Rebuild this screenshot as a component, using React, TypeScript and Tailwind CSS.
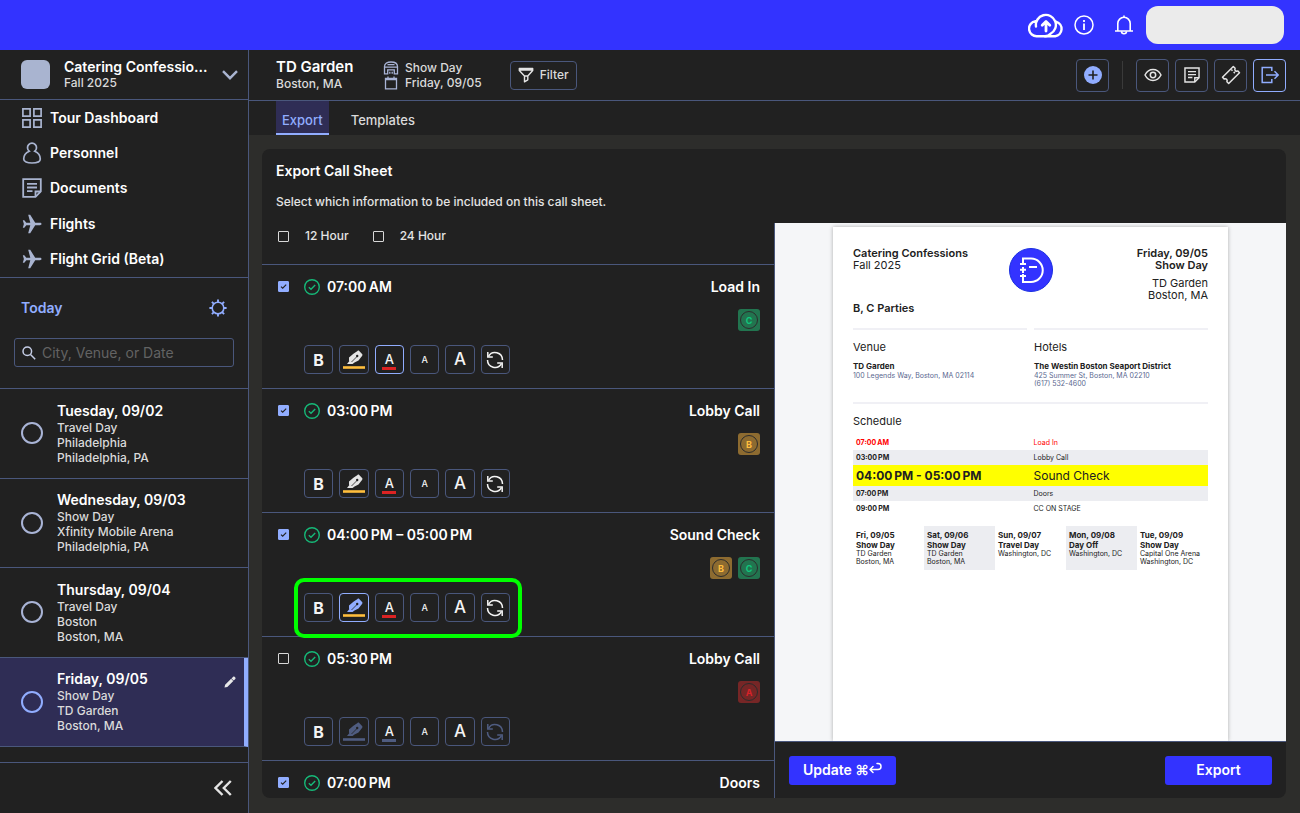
import { useState, type ReactNode } from 'react';
import clsx from 'clsx';

type Party = 'A' | 'B' | 'C';

type Tone = 'default' | 'active' | 'disabled';

interface CallItem {
    id: string;
    time: string;
    title: string;
    parties: Party[];
    included: boolean;
    highlight: Tone;
    color: Tone;
    spotlight?: boolean;
    collapsed?: boolean;
}

const navLinks = [
    { label: 'Tour Dashboard', icon: <GridIcon /> },
    { label: 'Personnel', icon: <PersonIcon /> },
    { label: 'Documents', icon: <NoteIcon className="h-5 w-5" /> },
    { label: 'Flights', icon: <PlaneIcon /> },
    { label: 'Flight Grid (Beta)', icon: <PlaneIcon /> },
];

const days = [
    { date: 'Tuesday, 09/02', lines: ['Travel Day', 'Philadelphia', 'Philadelphia, PA'] },
    { date: 'Wednesday, 09/03', lines: ['Show Day', 'Xfinity Mobile Arena', 'Philadelphia, PA'] },
    { date: 'Thursday, 09/04', lines: ['Travel Day', 'Boston', 'Boston, MA'] },
    { date: 'Friday, 09/05', lines: ['Show Day', 'TD Garden', 'Boston, MA'], current: true },
];

const initialItems: CallItem[] = [
    { id: 'load-in', time: '07:00\u202fAM', title: 'Load In', parties: ['C'], included: true, highlight: 'default', color: 'active' },
    { id: 'lobby-1', time: '03:00\u202fPM', title: 'Lobby Call', parties: ['B'], included: true, highlight: 'default', color: 'default' },
    { id: 'sound-check', time: '04:00\u202fPM – 05:00\u202fPM', title: 'Sound Check', parties: ['B', 'C'], included: true, highlight: 'active', color: 'default', spotlight: true },
    { id: 'lobby-2', time: '05:30\u202fPM', title: 'Lobby Call', parties: ['A'], included: false, highlight: 'disabled', color: 'disabled' },
    { id: 'doors', time: '07:00\u202fPM', title: 'Doors', parties: [], included: true, highlight: 'default', color: 'default', collapsed: true },
];

const scheduleRows = [
    { time: '07:00\u202fAM', label: 'Load In', row: 'h-[15px] text-[7px] text-[#ff0000]' },
    { time: '03:00\u202fPM', label: 'Lobby Call', row: 'h-[15px] text-[7px] bg-[#ecedf1]' },
    { time: '04:00\u202fPM - 05:00\u202fPM', label: 'Sound Check', row: 'h-[21px] text-[12px] bg-[#ffff00]' },
    { time: '07:00\u202fPM', label: 'Doors', row: 'h-[15px] text-[7px] bg-[#ecedf1]' },
    { time: '09:00\u202fPM', label: 'CC ON STAGE', row: 'h-[15px] text-[7px]' },
];

const upcoming = [
    { date: 'Fri, 09/05', type: 'Show Day', lines: ['TD Garden', 'Boston, MA'] },
    { date: 'Sat, 09/06', type: 'Show Day', lines: ['TD Garden', 'Boston, MA'] },
    { date: 'Sun, 09/07', type: 'Travel Day', lines: ['Washington, DC'] },
    { date: 'Mon, 09/08', type: 'Day Off', lines: ['Washington, DC'] },
    { date: 'Tue, 09/09', type: 'Show Day', lines: ['Capital One Arena', 'Washington, DC'] },
];

/* ---------- Icons ---------- */

function GridIcon() {
    return (
        <svg viewBox="0 0 20 20" className="h-5 w-5" fill="none" stroke="currentColor" strokeWidth="1.7">
            <path d="M.9.9h7.200v7.200H.9zM11.900.9h7.200v7.200h-7.200zM.9 11.900h7.200v7.200H.9zM11.900 11.900h7.200v7.200h-7.200z" />
        </svg>
    );
}

function PersonIcon() {
    return (
        <svg viewBox="0 0 20 22" className="h-[22px] w-5" fill="none" stroke="currentColor" strokeWidth="1.7">
            <path d="M7.2 9.2A4.500 4.500 0 1 1 12.800 9.200C16 10.600 18.300 14 18.300 17c0 2.600-3.500 4-8.300 4s-8.300-1.400-8.300-4c0-3 2.300-6.400 5.500-7.800z" />
        </svg>
    );
}

function NoteIcon({ className }: { className: string }) {
    return (
        <svg viewBox="0 0 20 20" className={className} fill="none" stroke="currentColor" strokeWidth="1.8">
            <path d="M1.200 1.200h17.600v12.300l-5.300 5.300H1.200z" />
            <path d="M13.500 18.800v-5.300h5.300M5 5.800h10M5 9.500h10M5 13.200h5.500" />
        </svg>
    );
}

function PlaneIcon() {
    return (
        <svg viewBox="0 0 20 20" className="h-5 w-5" fill="currentColor">
            <path d="M.8 6.200h1.500l2 2.600h4L6.200.7h2l5 8.100h4.700c1 0 1.600.5 1.600 1.200s-.6 1.200-1.600 1.200h-4.700l-5 8.100h-2l2.100-8.100h-4l-2 2.600H.8L1.900 10z" />
        </svg>
    );
}

function CloudUploadIcon() {
    return (
        <svg viewBox="0 0 36 26" className="h-[26px] w-9" fill="none" stroke="#fff" strokeWidth="2.400" strokeLinecap="round" strokeLinejoin="round">
            <path d="M8 14.500a10 10 0 1 1 14.500 7.300c-1.300 1.600-3 2.400-5.500 2.400H9.300A7.600 7.600 0 0 1 7.600 9.100" />
            <path d="M28.300 9.800a7.400 7.400 0 0 1-1 14.400H17" />
            <path d="M18 19v-8.500M14.200 13.200 18 9.400l3.800 3.800" strokeWidth="2.800" />
        </svg>
    );
}

function InfoIcon() {
    return (
        <svg viewBox="0 0 20 20" className="h-5 w-5" fill="none" stroke="#fff" strokeWidth="1.500">
            <circle cx="10" cy="10" r="9" />
            <path d="M10 8.500v6.500M10 5v2" strokeWidth="1.800" />
        </svg>
    );
}

function BellIcon() {
    return (
        <svg viewBox="0 0 20 20" className="h-5 w-5" fill="none" stroke="#fff" strokeWidth="1.600">
            <path d="M1 16h18M3.800 16V8.500a6.200 6.200 0 0 1 12.400 0V16M10 2.300V.5" />
            <path d="M7.500 16.200a2.500 2.500 0 0 0 5 0" />
        </svg>
    );
}

function VenueIcon() {
    return (
        <svg viewBox="0 0 16 14" className="h-3.5 w-4" fill="none" stroke="#a9b4d6" strokeWidth="1.300">
            <path d="M1.500 12.800V5.500C1.500 2.500 4.300 1 8 1s6.500 1.500 6.500 4.500v7.300h-3.200v-4H4.700v4zM1.500 6.200h13M6.800 12.800v-2M9.200 12.800v-2M4.500 3.700h7" />
        </svg>
    );
}

function CalendarIcon() {
    return (
        <svg viewBox="0 0 16 14" className="h-3.5 w-4" fill="none" stroke="#a9b4d6" strokeWidth="1.300">
            <path d="M2.500 2.500h11v10.300h-11zM2.500 3.700h11M5 .6v2M11 .6v2" />
        </svg>
    );
}

function FilterIcon() {
    return (
        <svg viewBox="0 0 16 16" className="h-4 w-4" fill="none" stroke="#e4e4e4" strokeWidth="1.400" strokeLinejoin="round">
            <path d="M1.300 1.500h13.400v2L9.800 9v3.800L6.500 14.800V9L1.300 3.500zM1.300 3h13.400M6.500 9h3.300" />
        </svg>
    );
}

function PlusCircleIcon() {
    return (
        <svg viewBox="0 0 18 18" className="h-[18px] w-[18px]">
            <circle cx="9" cy="9" r="9" fill="#91adff" />
            <path d="M9 4.500v9M4.500 9h9" stroke="#212121" strokeWidth="1.600" />
        </svg>
    );
}

function EyeIcon() {
    return (
        <svg viewBox="0 0 18 14" className="h-3.5 w-[18px]" fill="none" stroke="currentColor" strokeWidth="1.500">
            <path d="M1 7c1.800-3.500 4.600-5.500 8-5.500S15.200 3.500 17 7c-1.800 3.500-4.600 5.500-8 5.500S2.800 10.500 1 7z" />
            <circle cx="9" cy="7" r="2.700" />
        </svg>
    );
}

function TicketIcon() {
    return (
        <svg viewBox="0 0 20 20" className="h-5 w-5" fill="none" stroke="currentColor" strokeWidth="1.500" strokeLinejoin="round">
            <path d="M1.500 12.300 12.300 1.500l1.800 1.800a1.900 1.900 0 0 0 2.600 2.600l1.800 1.800L7.700 18.500l-1.800-1.800a1.900 1.900 0 0 0-2.600-2.600z" />
            <path d="m10.300 4.500 1.200 1.200M12.700 6.900l1.200 1.200" />
        </svg>
    );
}

function ExportIcon() {
    return (
        <svg viewBox="0 0 18 18" className="h-[18px] w-[18px]" fill="none" stroke="#91adff" strokeWidth="1.500">
            <path d="M10.800 5V1.500H1.200v15h9.600V13M5 9h12M13.500 5.300 17.200 9l-3.700 3.700" />
        </svg>
    );
}

function GearIcon() {
    return (
        <svg viewBox="0 0 18 18" className="h-[18px] w-[18px]" fill="none" stroke="#91adff" strokeWidth="1.600">
            <circle cx="9" cy="9" r="5.800" />
            <path d="M9 3.200V.4M9 14.800v2.800M3.200 9H.4M14.800 9h2.800M4.900 4.900 2.900 2.900M13.100 13.100l2 2M4.900 13.100l-2 2M13.100 4.900l2-2" strokeWidth="1.900" />
        </svg>
    );
}

function SearchIcon() {
    return (
        <svg viewBox="0 0 14 14" className="h-3.5 w-3.5 shrink-0" fill="none" stroke="#c5cde6" strokeWidth="1.500">
            <circle cx="5.300" cy="5.300" r="4.300" />
            <path d="m8.500 8.500 4.700 4.700" />
        </svg>
    );
}

function PencilIcon() {
    return (
        <svg viewBox="0 0 12 12" className="h-3 w-3" fill="#e8e8e8">
            <path d="m.5 11.500.6-2.700 6-6 2.200 2.200-6 6zM7.500 2.400l1.700-1.600c.4-.4.9-.4 1.300 0l.8.8c.4.4.4.900 0 1.300L9.700 4.600z" />
        </svg>
    );
}

function ConfirmedIcon() {
    return (
        <svg viewBox="0 0 16 16" className="h-4 w-4 shrink-0" fill="none" stroke="#16b978" strokeWidth="1.400">
            <circle cx="8" cy="8" r="7.300" />
            <path d="m4.800 8.300 2.200 2 4.200-4.300" />
        </svg>
    );
}

function HighlighterIcon({ tone }: { tone: Tone }) {
    const pen = { default: '#e4e4e4', active: '#91adff', disabled: '#4f5c80' }[tone];
    return (
        <svg viewBox="0 0 22 20" className="h-5 w-[22px]">
            <path fill={pen} d="M14.500.9c.6-.4 1.200-.4 1.700.1l2.900 3c.5.500.5 1.100.1 1.700l-3.700 4.700-4 2.100-1.900 1.500H4l2.400-2.900-.4-.4V7.500l4.400-3.800z" />
            <path stroke="#212121" strokeWidth=".8" d="M14 6.500 8.500 12" />
            <circle cx="14.200" cy="6" r="1.200" fill="#212121" />
            <path stroke={tone === 'disabled' ? '#4f5c80' : '#ffbe3d'} strokeWidth="2.600" d="M0 17.500h22" />
        </svg>
    );
}

function ResetIcon() {
    return (
        <svg viewBox="0 0 18 18" className="h-[18px] w-[18px]" fill="none" stroke="currentColor" strokeWidth="1.500">
            <path d="M2.500 5.300A7.500 7.500 0 0 1 16.500 9M15.500 12.700A7.500 7.500 0 0 1 1.500 9" />
            <path d="M1.800 1v5h5M16.200 17v-5h-5" />
        </svg>
    );
}

function ReturnIcon() {
    return (
        <svg viewBox="0 0 13 12" className="mb-1 h-3 w-[13px]" fill="none" stroke="currentColor" strokeWidth="1.500" strokeLinecap="round" strokeLinejoin="round">
            <path d="M4 4.500 1 7.500l3 3M1 7.500h8a3 3 0 0 0 0-6H8" />
        </svg>
    );
}

function BrandMark() {
    return (
        <svg viewBox="0 0 44 44" className="h-11 w-11" fill="none">
            <circle cx="22" cy="22" r="21.500" fill="#3333ff" stroke="#1a2fe0" />
            <path stroke="#fff" strokeWidth="2" d="M14 14v-3.500h8a11.500 11.500 0 0 1 0 23.500h-8v-3M20 19h8M11 16h6M14 13v3M11 21.800h6M14 19v6M11 28h6M14 26v5" />
        </svg>
    );
}

/* ---------- Controls ---------- */

function Checkbox({ id, checked, onChange }: { id: string; checked: boolean; onChange: () => void }) {
    return (
        <span className="relative block h-[11px] w-[11px]">
            <input
                id={id}
                type="checkbox"
                checked={checked}
                onChange={onChange}
                className="block h-[11px] w-[11px] appearance-none rounded-[1px] border border-[#d8d8d8] checked:border-[#91adff] checked:bg-[#91adff]"
            />
            {checked && (
                <svg viewBox="0 0 11 11" className="pointer-events-none absolute inset-0" fill="none" stroke="#212121" strokeWidth="1.200">
                    <path d="m3 5.600 1.700 1.600L8.200 3.700" />
                </svg>
            )}
        </span>
    );
}

function ToolButton({ label, active, children }: { label: string; active?: boolean; children: ReactNode }) {
    return (
        <button
            aria-label={label}
            className={clsx(
                'flex aspect-square items-center justify-center rounded-[4px] border leading-none text-[#f4f4f4]',
                active ? 'border-[#91adff]' : 'border-[#4a577c]',
            )}
        >
            {children}
        </button>
    );
}

function BarButton({ label, active, children }: { label: string; active?: boolean; children: ReactNode }) {
    return (
        <button
            aria-label={label}
            className={clsx(
                'flex h-[33px] w-[33px] items-center justify-center rounded-[4px] border text-[#e4e4e4]',
                active ? 'border-[#91adff]' : 'border-[#4a577c]',
            )}
        >
            {children}
        </button>
    );
}

function PartyBadge({ party }: { party: Party }) {
    const tone = {
        A: 'bg-[#762626] text-[#d8232a]',
        B: 'bg-[#8d6b30] text-[#ffbe3d]',
        C: 'bg-[#22744f] text-[#10c77e]',
    }[party];
    return (
        <span className={clsx('flex h-[22px] w-[22px] items-center justify-center rounded-[3px]', tone)}>
            <span className="flex h-[18px] w-[18px] items-center justify-center rounded-full border border-[#2c2c2c] text-[9px] font-bold leading-none">{party}</span>
        </span>
    );
}

function FormatTools({ item }: { item: CallItem }) {
    return (
        <div className="mt-3.5 grid w-[206px] grid-cols-6 gap-1.5">
            <ToolButton label="Bold">
                <span className="text-base font-bold">B</span>
            </ToolButton>
            <ToolButton label="Highlight" active={item.highlight === 'active'}>
                <HighlighterIcon tone={item.highlight} />
            </ToolButton>
            <ToolButton label="Text color" active={item.color === 'active'}>
                <span className={clsx('mt-1 w-3.5 border-b-[3px] pb-0.5 text-[13px] leading-3 font-medium', item.color === 'disabled' ? 'border-[#4f5c80]' : 'border-[#db2323]')}>A</span>
            </ToolButton>
            <ToolButton label="Smaller text">
                <span className="text-[9px] font-medium">A</span>
            </ToolButton>
            <ToolButton label="Larger text">
                <span className="text-[17px] font-medium">A</span>
            </ToolButton>
            <ToolButton label="Reset">
                <span className={item.included ? 'text-[#f4f4f4]' : 'text-[#4f5c80]'}>
                    <ResetIcon />
                </span>
            </ToolButton>
        </div>
    );
}

function CallRow({ item, onToggle }: { item: CallItem; onToggle: () => void }) {
    return (
        <li className={clsx('relative flex shrink-0 border-t border-[#4a577c] pr-3.5 pl-4', !item.collapsed && 'h-[124px]')}>
            <div className="pt-4">
                <Checkbox id={item.id} checked={item.included} onChange={onToggle} />
            </div>
            <div className="flex flex-1 flex-col pl-[15px]">
                <div className="flex h-11 items-center justify-between">
                    <label htmlFor={item.id} className="flex items-center gap-[7px] text-sm font-semibold text-white">
                        <ConfirmedIcon />
                        {item.time}
                    </label>
                    <h3 className="text-sm font-semibold text-white">{item.title}</h3>
                </div>
                <div className="flex justify-end gap-1.5">
                    {item.parties.map((party) => (
                        <PartyBadge key={party} party={party} />
                    ))}
                </div>
                {!item.collapsed && <FormatTools item={item} />}
            </div>
            {item.spotlight && <div className="pointer-events-none absolute top-[65px] left-8 z-10 h-[60px] w-[228px] rounded-[10px] border-4 border-[#00ff00]" />}
        </li>
    );
}

/* ---------- Page sections ---------- */

function Sidebar() {
    return (
        <aside className="flex w-[249px] shrink-0 flex-col border-r border-[#4a577c] bg-[#212121]">
            <button className="flex h-[50px] shrink-0 items-center border-b border-[#4a577c] pr-2.5 pl-[21px] text-left">
                <span className="h-[29px] w-[29px] rounded-md bg-[#a9b4d0]" />
                <span className="ml-3.5">
                    <span className="block text-sm leading-4 font-semibold whitespace-nowrap text-white">Catering Confessio...</span>
                    <span className="block text-xs leading-4 font-medium text-[#dadada]">Fall 2025</span>
                </span>
                <svg viewBox="0 0 16 10" className="ml-auto h-2.5 w-4" fill="none" stroke="#a9b4d0" strokeWidth="2.400">
                    <path d="m1 1.200 7 7 7-7" />
                </svg>
            </button>

            <nav className="grid h-[178px] shrink-0 grid-rows-5 border-b border-[#4a577c] pl-[21px]">
                {navLinks.map((link) => (
                    <a key={link.label} href="#" className="flex items-center gap-2 text-sm font-semibold text-white">
                        <span className="flex w-[21px] justify-center text-[#a9b4d0]">{link.icon}</span>
                        {link.label}
                    </a>
                ))}
            </nav>

            <div className="shrink-0 border-b border-[#4a577c] px-3.5 pb-[21px]">
                <div className="flex h-[60px] items-center justify-between px-[7px]">
                    <a href="#" className="text-sm font-semibold text-[#91adff]">Today</a>
                    <button aria-label="Day settings"><GearIcon /></button>
                </div>
                <label className="flex h-[29px] items-center gap-1.5 rounded-[3px] border border-[#4a577c] px-[7px]">
                    <SearchIcon />
                    <input type="text" aria-label="Search days" placeholder="City, Venue, or Date" className="w-full bg-transparent text-sm outline-none placeholder:text-[#636363]" />
                </label>
            </div>

            <ul className="grid h-[358px] shrink-0 grid-rows-4">
                {days.map((day) => (
                    <li
                        key={day.date}
                        className={clsx('relative flex items-center border-b border-[#4a577c] pl-[21px]', day.current && 'border-r-4 border-r-[#91adff] bg-[#2f2d55]')}
                    >
                        <span className={clsx('h-[22px] w-[22px] rounded-full border-2', day.current ? 'border-[#91adff]' : 'border-[#a9b4d6]')} />
                        <div className="ml-3.5 text-xs leading-[15px] font-medium text-[#dadada]">
                            <h3 className="text-sm leading-[18px] font-semibold text-white">{day.date}</h3>
                            {day.lines.map((line) => (
                                <p key={line}>{line}</p>
                            ))}
                        </div>
                        {day.current && (
                            <button aria-label="Edit day" className="absolute top-[18px] right-2"><PencilIcon /></button>
                        )}
                    </li>
                ))}
            </ul>

            <div className="mt-auto flex h-[51px] shrink-0 items-center justify-end border-t border-[#4a577c] pr-4">
                <button aria-label="Collapse sidebar">
                    <svg viewBox="0 0 18 16" className="h-4 w-[18px]" fill="none" stroke="#e4e4e4" strokeWidth="2.400">
                        <path d="M8.500 1 1.500 8l7 7M16.800 1l-7 7 7 7" />
                    </svg>
                </button>
            </div>
        </aside>
    );
}

function TopBar() {
    return (
        <div className="flex h-[51px] shrink-0 items-center border-b border-[#4a577c] bg-[#212121] pr-3.5 pl-[27px]">
            <div className="w-[107px]">
                <h1 className="text-[15px] leading-[18px] font-semibold text-white">TD Garden</h1>
                <p className="text-xs leading-4 font-medium text-[#dadada]">Boston, MA</p>
            </div>
            <div className="text-xs leading-[15px] font-medium text-[#dadada]">
                <p className="flex items-center gap-1.5"><VenueIcon />Show Day</p>
                <p className="flex items-center gap-1.5"><CalendarIcon />Friday, 09/05</p>
            </div>
            <button className="ml-7 flex h-[29px] items-center gap-1.5 rounded-[4px] border border-[#4a577c] px-[7px] text-xs font-medium text-[#dadada]">
                <FilterIcon />
                Filter
            </button>
            <div className="ml-auto flex items-center gap-1.5">
                <BarButton label="Add"><PlusCircleIcon /></BarButton>
                <span className="mx-[7px] h-7 w-px bg-[#3a3a3a]" />
                <BarButton label="Preview"><EyeIcon /></BarButton>
                <BarButton label="Notes"><NoteIcon className="h-4 w-4" /></BarButton>
                <BarButton label="Guest list"><TicketIcon /></BarButton>
                <BarButton label="Export" active><ExportIcon /></BarButton>
            </div>
        </div>
    );
}

function CallSheetPage() {
    return (
        <div className="mx-auto h-full w-[395px] bg-white px-5 pt-5 text-[#212121] shadow-[0_0_4px_rgba(0,0,0,0.3)]">
            <header className="relative flex justify-between text-[11px] leading-3">
                <div>
                    <p className="font-semibold">Catering Confessions</p>
                    <p>Fall 2025</p>
                    <p className="mt-[31px] font-semibold">B, C Parties</p>
                </div>
                <div className="absolute top-px left-1/2 -translate-x-1/2">
                    <BrandMark />
                </div>
                <div className="text-right">
                    <p className="font-semibold">Friday, 09/05</p>
                    <p className="font-semibold">Show Day</p>
                    <p className="mt-1.5">TD Garden</p>
                    <p>Boston, MA</p>
                </div>
            </header>
            <div className="mt-3.5 grid grid-cols-2 gap-[7px] text-[7px] leading-2 text-[#5a688f]">
                <section className="h-[74px] border-t-2 border-[#f0f0f5] pt-2.5">
                    <h2 className="text-[11px] leading-3.5 text-[#212121]">Venue</h2>
                    <p className="mt-1.5 text-[8px] leading-3 font-bold text-[#212121]">TD Garden</p>
                    <p>100 Legends Way, Boston, MA 02114</p>
                </section>
                <section className="border-t-2 border-[#f0f0f5] pt-2.5">
                    <h2 className="text-[11px] leading-3.5 text-[#212121]">Hotels</h2>
                    <p className="mt-1.5 text-[8px] leading-3 font-bold text-[#212121]">The Westin Boston Seaport District</p>
                    <p>425 Summer St, Boston, MA 02210</p>
                    <p>(617) 532-4600</p>
                </section>
            </div>
            <section className="border-t-2 border-[#f0f0f5] pt-2.5">
                <h2 className="text-[11px] leading-3.5">Schedule</h2>
                <table className="mt-[7px] w-full table-fixed leading-none">
                    <tbody>
                        {scheduleRows.map((row) => (
                            <tr key={row.time} className={row.row}>
                                <th scope="row" className="p-0 pl-[3px] text-left font-bold">{row.time}</th>
                                <td className="p-0 pl-[3px]">{row.label}</td>
                            </tr>
                        ))}
                    </tbody>
                </table>
            </section>
            <div className="mt-2.5 grid grid-cols-5 text-[7px] leading-2">
                {upcoming.map((day, index) => (
                    <div key={day.date} className={clsx('h-11 px-[3px] pt-1', index % 2 === 1 && 'bg-[#ecedf1]')}>
                        <p className="text-[8px] leading-[10px] font-bold">{day.date}</p>
                        <p className="text-[8px] leading-[10px] font-bold">{day.type}</p>
                        {day.lines.map((line) => (
                            <p key={line}>{line}</p>
                        ))}
                    </div>
                ))}
            </div>
        </div>
    );
}

export default function App() {
    const [items, setItems] = useState(initialItems);
    const [clock, setClock] = useState<'12' | '24' | null>(null);

    const toggleItem = (id: string) => {
        setItems(items.map((item) => (item.id === id ? { ...item, included: !item.included } : item)));
    };

    return (
        <div className="flex h-screen flex-col overflow-hidden bg-[#2d2d2b] font-[Inter,'Liberation_Sans',sans-serif]">
            <header className="flex h-[50px] shrink-0 items-center justify-end bg-[#3333ff] pr-4">
                <button aria-label="Uploads"><CloudUploadIcon /></button>
                <button aria-label="Information" className="ml-2.5"><InfoIcon /></button>
                <button aria-label="Notifications" className="ml-5"><BellIcon /></button>
                <div className="ml-3 h-[38px] w-[138px] rounded-xl bg-[#ebebeb]" />
            </header>

            <div className="flex min-h-0 flex-1">
                <Sidebar />
                <main className="flex min-w-0 flex-1 flex-col">
                    <TopBar />
                    <nav className="flex h-[34px] shrink-0 bg-[#212121] pl-[27px] text-[13px] font-medium">
                        <a href="#" className="flex items-center border-b-2 border-[#91adff] bg-[#2f2d55] px-1.5 pt-2 text-[#91adff]">Export</a>
                        <a href="#" className="ml-4 flex items-center border-b-2 border-transparent px-1.5 pt-2 text-[#dadada]">Templates</a>
                    </nav>

                    <div className="mt-3.5 mr-3.5 mb-[15px] ml-[13px] flex min-h-0 flex-1 overflow-hidden rounded-lg bg-[#212121]">
                        <section className="flex min-w-0 flex-1 flex-col overflow-hidden">
                            <div className="h-[115px] shrink-0 pt-3 pl-3.5 text-xs font-medium text-[#e4e4e4]">
                                <h2 className="text-sm leading-5 font-semibold text-white">Export Call Sheet</h2>
                                <p className="mt-[11px] leading-5">Select which information to be included on this call sheet.</p>
                                <div className="mt-3.5 flex items-center gap-6 pl-0.5 leading-5">
                                    <div className="flex items-center gap-4">
                                        <Checkbox id="clock-12" checked={clock === '12'} onChange={() => setClock('12')} />
                                        <label htmlFor="clock-12">12 Hour</label>
                                    </div>
                                    <div className="flex items-center gap-4">
                                        <Checkbox id="clock-24" checked={clock === '24'} onChange={() => setClock('24')} />
                                        <label htmlFor="clock-24">24 Hour</label>
                                    </div>
                                </div>
                            </div>
                            <ul className="flex flex-col">
                                {items.map((item) => (
                                    <CallRow key={item.id} item={item} onToggle={() => toggleItem(item.id)} />
                                ))}
                            </ul>
                        </section>

                        <section className="mt-[74px] flex w-1/2 shrink-0 flex-col border-l border-[#4a577c]">
                            <div className="min-h-0 flex-1 overflow-hidden bg-[#f5f6f8] pt-1">
                                <CallSheetPage />
                            </div>
                            <div className="flex h-[57px] shrink-0 items-center justify-between border-t border-[#4a577c] px-3.5 text-sm font-semibold text-white">
                                <button className="flex h-[29px] w-[107px] items-center justify-center rounded-[3px] bg-[#3333ff]">
                                    Update ⌘
                                    <ReturnIcon />
                                </button>
                                <button className="h-[29px] w-[107px] rounded-[3px] bg-[#3333ff]">Export</button>
                            </div>
                        </section>
                    </div>
                </main>
            </div>
        </div>
    );
}
